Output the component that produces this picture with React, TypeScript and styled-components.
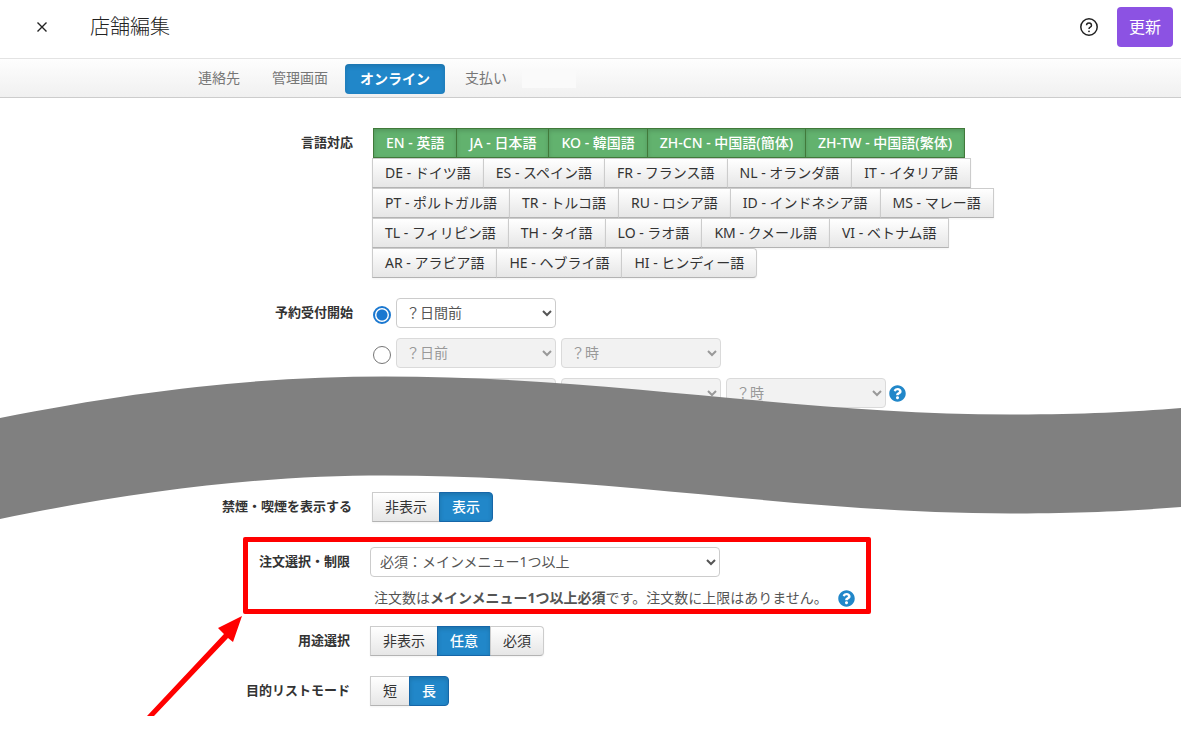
import React, { useState } from "react";
import styled, { createGlobalStyle, css } from "styled-components";

const GlobalStyle = createGlobalStyle`
  * { box-sizing: border-box; }
  body {
    margin: 0;
    background: #fff;
    color: #333;
    font-family: "Noto Sans", "Noto Sans CJK JP", sans-serif;
    font-size: 14px;
    line-height: 20px;
  }
  button, select { font: inherit; }
`;

const Header = styled.header`
  display: flex;
  align-items: center;
  height: 59px;
  padding: 0 8px 4px 32px;
  border-bottom: 1px solid #e3e3e3;
`;

const IconButton = styled.button`
  display: flex;
  align-items: center;
  justify-content: center;
  width: 20px;
  height: 20px;
  padding: 0;
  border: 0;
  background: none;
  color: #222;
`;

const Title = styled.h1`
  flex: 1;
  margin: 0 0 0 38px;
  color: #222;
  font-size: 20px;
  font-weight: 300;
  line-height: 28px;
`;

const UpdateButton = styled.button`
  width: 56px;
  height: 40px;
  margin-left: 18px;
  padding: 0;
  border: 0;
  border-radius: 4px;
  background: #8c52e3;
  color: #fff;
  font-size: 16px;
`;

const TabBar = styled.nav`
  display: flex;
  align-items: center;
  gap: 2px;
  height: 39px;
  padding: 1px 0 0 183px;
  border-bottom: 1px solid #ccc;
  background: linear-gradient(#fefefe, #f0f0f0);
`;

const Tab = styled.a<{ $active?: boolean }>`
  padding: 4px 15px 6px;
  border-radius: 4px;
  color: #777;
  text-decoration: none;
  ${(p) =>
    p.$active &&
    css`
      padding: 5px 15px;
      background: #2187c9;
      box-shadow: inset 0 2px 5px rgba(0, 0, 0, 0.15);
      color: #fff;
      font-weight: 700;
    `}
`;

const TabExtra = styled.div`
  display: flex;
  align-items: center;
  margin-left: 3px;
`;

const TabBlank = styled.span`
  width: 54px;
  height: 18px;
  background: #fafafa;
`;

const Content = styled.main`
  position: relative;
  padding: 30px 0 24px;
`;

const Section = styled.section<{ $label: number; $gap: number }>`
  display: flex;
  flex-direction: column;
  gap: ${(p) => p.$gap}px;
  --label-width: ${(p) => p.$label}px;
`;

const SmokingSection = styled(Section)`
  margin-top: 84px;
`;

const OrderSection = styled(Section)`
  margin-top: 25px;
`;

const Row = styled.div`
  display: flex;
  align-items: flex-start;
  gap: 20px;
`;

const Label = styled.div`
  flex: none;
  width: var(--label-width);
  padding-top: 4px;
  font-size: 13px;
  font-weight: 700;
  text-align: right;
`;

const Group = styled.div`
  display: flex;
  flex-wrap: wrap;
  max-width: 640px;
`;

const tones = {
  plain: css`
    border-color: #ccc #ccc #b3b3b3;
    background: linear-gradient(#fff, #e6e6e6);
    color: #333;
  `,
  green: css`
    border-color: #41793a;
    background: #62b26e;
    box-shadow: inset 0 2px 4px rgba(0, 0, 0, 0.15);
    color: #fff;
    font-weight: 500;
    z-index: 1;
  `,
  blue: css`
    border-color: #1666a8;
    background: #2187c9;
    box-shadow: inset 0 2px 4px rgba(0, 0, 0, 0.15);
    color: #fff;
    font-weight: 500;
  `,
};

const GroupButton = styled.button<{ $tone: keyof typeof tones }>`
  height: 30px;
  padding: 0 12px;
  border: 1px solid;
  box-shadow: 0 1px 2px rgba(0, 0, 0, 0.05);
  white-space: nowrap;
  ${(p) => tones[p.$tone]}
  & + & { margin-left: -1px; }
  &:last-child { border-radius: 0 4px 4px 0; }
`;

const Stack = styled.div`
  display: flex;
  flex-direction: column;
  gap: 10px;
`;

const Choice = styled.div`
  display: flex;
  align-items: center;
  gap: 5px;
`;

const Radio = styled.input`
  appearance: none;
  width: 18px;
  height: 18px;
  margin: 4px 0 0;
  border: 1px solid #767676;
  border-radius: 50%;
  background: #fff;
  &:checked {
    border: 2px solid #1b78d0;
    background: radial-gradient(circle, #1b78d0 5px, #fff 6px);
  }
`;

const Select = styled.select<{ $wide?: boolean }>`
  width: ${(p) => (p.$wide ? 350 : 160)}px;
  height: 30px;
  padding: 0 6px 2px 5px;
  border: 1px solid #ccc;
  border-radius: 4px;
  background: #fff;
  color: #555;
  &:disabled {
    border-color: #dadada;
    background: #f2f2f2;
    color: #999;
    opacity: 1;
  }
`;

const HelpLink = styled.a`
  display: block;
  width: 17px;
  height: 17px;
  margin-left: -2px;
`;

const Note = styled.p`
  display: flex;
  align-items: center;
  gap: 12px;
  margin: 0;
  padding: 1px 0 0 4px;
  color: #555;
`;

const OrderRow = styled(Row)`
  position: relative;
  margin-bottom: -2px;
`;

const Highlight = styled.div`
  position: absolute;
  top: -10px;
  left: 243px;
  width: 628px;
  height: 77px;
  border: 5px solid #f00;
  border-radius: 2px;
  pointer-events: none;
`;

const Arrow = styled.svg`
  position: absolute;
  top: 68px;
  left: 146px;
  pointer-events: none;
`;

const Wave = styled.svg`
  position: absolute;
  top: 270px;
  left: 0;
  width: 100%;
  height: 160px;
  pointer-events: none;
`;

const Help = () => (
  <HelpLink href="#help" aria-label="ヘルプ">
    <svg width="17" height="17" viewBox="0 0 512 512" aria-hidden="true">
      <path
        fill="#2187c9"
        d="M504 256c0 136.997-111.043 248-248 248S8 392.997 8 256C8 119.083 119.043 8 256 8s248 111.083 248 248zM262.655 90c-54.497 0-89.255 22.957-116.549 63.758-3.536 5.286-2.353 12.415 2.715 16.258l34.699 26.31c5.205 3.947 12.621 3.008 16.665-2.122 17.864-22.658 30.113-35.797 57.303-35.797 20.429 0 45.698 13.148 45.698 32.958 0 14.976-12.363 22.667-32.534 33.976C247.128 238.528 216 254.941 216 296v4c0 6.627 5.373 12 12 12h56c6.627 0 12-5.373 12-12v-1.333c0-28.462 83.186-29.647 83.186-106.667 0-58.002-60.165-102-116.531-102zM256 338c-25.365 0-46 20.635-46 46 0 25.364 20.635 46 46 46s46-20.636 46-46c0-25.365-20.635-46-46-46z"
      />
    </svg>
  </HelpLink>
);

const enabledLanguages = [
  "EN - 英語",
  "JA - 日本語",
  "KO - 韓国語",
  "ZH-CN - 中国語(簡体)",
  "ZH-TW - 中国語(繁体)",
];

const otherLanguages = [
  "DE - ドイツ語",
  "ES - スペイン語",
  "FR - フランス語",
  "NL - オランダ語",
  "IT - イタリア語",
  "PT - ポルトガル語",
  "TR - トルコ語",
  "RU - ロシア語",
  "ID - インドネシア語",
  "MS - マレー語",
  "TL - フィリピン語",
  "TH - タイ語",
  "LO - ラオ語",
  "KM - クメール語",
  "VI - ベトナム語",
  "AR - アラビア語",
  "HE - ヘブライ語",
  "HI - ヒンディー語",
];

const startOptions = [["？日間前"], ["？日前", "？時"], ["？ヶ月前", "？日", "？時"]];

const Toggle = ({ label, options, initial }: { label: string; options: string[]; initial: string }) => {
  const [value, setValue] = useState(initial);
  return (
    <Row>
      <Label>{label}</Label>
      <Group role="group" aria-label={label}>
        {options.map((o) => (
          <GroupButton
            key={o}
            type="button"
            $tone={o === value ? "blue" : "plain"}
            aria-pressed={o === value}
            onClick={() => setValue(o)}
          >
            {o}
          </GroupButton>
        ))}
      </Group>
    </Row>
  );
};

export default function App() {
  const [start, setStart] = useState(0);
  return (
    <>
      <GlobalStyle />
      <Header>
        <IconButton type="button" aria-label="閉じる">
          <svg width="12" height="12" viewBox="0 0 12 12" fill="none" stroke="currentColor" strokeWidth="1.4">
            <path d="M1.5 1.5l9 9M10.500 1.500l-9 9" />
          </svg>
        </IconButton>
        <Title>店舗編集</Title>
        <IconButton type="button" aria-label="ヘルプ">
          <svg width="20" height="20" viewBox="0 0 20 20" fill="none" stroke="currentColor" strokeWidth="1.5">
            <circle cx="10" cy="10" r="8.200" />
            <path d="M7.500 8.200a2.500 2.300 0 1 1 3.800 2c-.9.500-1.300.8-1.300 1.700" />
            <circle cx="10" cy="14.300" r=".9" fill="currentColor" stroke="none" />
          </svg>
        </IconButton>
        <UpdateButton type="button">更新</UpdateButton>
      </Header>
      <TabBar>
        <Tab href="#contact">連絡先</Tab>
        <Tab href="#admin">管理画面</Tab>
        <Tab href="#online" $active aria-current="page">
          オンライン
        </Tab>
        <TabExtra>
          <Tab href="#payment">支払い</Tab>
          <TabBlank />
        </TabExtra>
      </TabBar>
      <Content>
        <Section $label={353} $gap={20}>
          <Row>
            <Label>言語対応</Label>
            <Group role="group" aria-label="言語対応">
              {enabledLanguages.map((l) => (
                <GroupButton key={l} type="button" $tone="green" aria-pressed="true">
                  {l}
                </GroupButton>
              ))}
              {otherLanguages.map((l) => (
                <GroupButton key={l} type="button" $tone="plain" aria-pressed="false">
                  {l}
                </GroupButton>
              ))}
            </Group>
          </Row>
          <Row>
            <Label id="start-label">予約受付開始</Label>
            <Stack role="radiogroup" aria-labelledby="start-label">
              {startOptions.map((fields, i) => (
                <Choice key={i}>
                  <Radio
                    type="radio"
                    name="start"
                    aria-label={fields.join(" ")}
                    checked={start === i}
                    onChange={() => setStart(i)}
                  />
                  {fields.map((f) => (
                    <Select key={f} aria-label={f} disabled={start !== i}>
                      <option>{f}</option>
                    </Select>
                  ))}
                  {i === 2 && <Help />}
                </Choice>
              ))}
            </Stack>
          </Row>
        </Section>
        <SmokingSection $label={352} $gap={20}>
          <Toggle label="禁煙・喫煙を表示する" options={["非表示", "表示"]} initial="表示" />
        </SmokingSection>
        <OrderSection $label={350} $gap={20}>
          <OrderRow>
            <Label as="label" htmlFor="order-limit">
              注文選択・制限
            </Label>
            <Stack>
              <Select id="order-limit" $wide>
                <option>必須：メインメニュー1つ以上</option>
              </Select>
              <Note>
                <span>
                  注文数は<strong>メインメニュー1つ以上必須</strong>です。注文数に上限はありません。
                </span>
                <Help />
              </Note>
            </Stack>
            <Highlight />
            <Arrow width="98" height="102" viewBox="0 0 98 102" aria-hidden="true">
              <path fill="#f00" d="M96 1L72 13 78 19 1 101H8L82 23 87 27Z" />
            </Arrow>
          </OrderRow>
          <Toggle label="用途選択" options={["非表示", "任意", "必須"]} initial="任意" />
          <Toggle label="目的リストモード" options={["短", "長"]} initial="長" />
        </OrderSection>
        <Wave viewBox="0 368 1181 160" preserveAspectRatio="none" aria-hidden="true">
          <path
            fill="#808080"
            d="M0 418C150 388 270 376.500 385 376.500C610 376.500 800 414.500 1010 414.500C1080 414.500 1130 412 1181 408V507C1130 511 1080 513.500 1010 513.500C800 513.500 610 475.500 385 475.500C270 475.500 150 488 0 519Z"
          />
        </Wave>
      </Content>
    </>
  );
}
